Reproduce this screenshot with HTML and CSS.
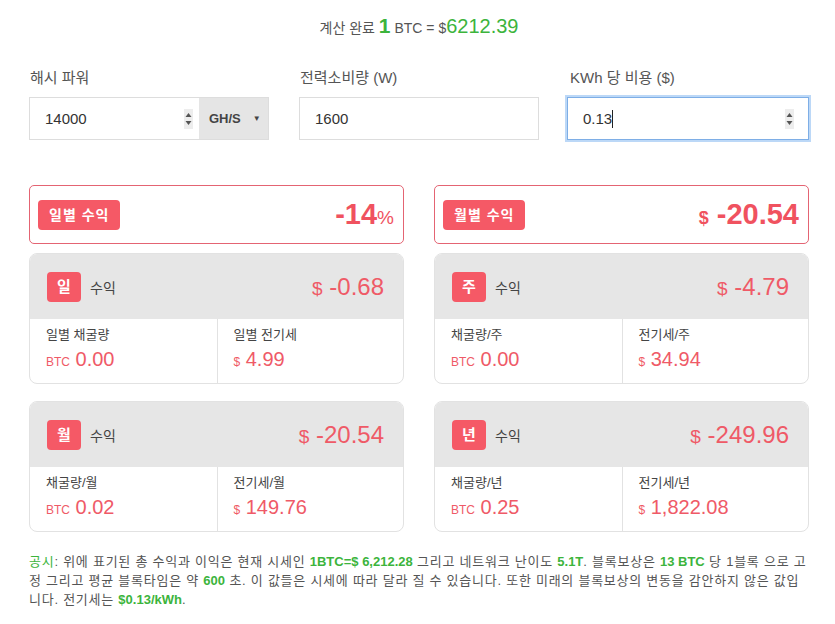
FILE: index.html
```html
<!DOCTYPE html>
<html lang="ko">
  <head>
    <meta charset="UTF-8" />
    <meta name="viewport" content="width=device-width, initial-scale=1.0" />
    <title>채굴 수익 계산기</title>
    <link rel="stylesheet" href="styles.css">
  </head>
  <body>
    <div class="page">
      <p class="rate">계산 완료 <b class="rate-num">1</b> BTC = $<span class="rate-price">6212.39</span></p>

      <div class="inputs">
        <div class="field">
          <div class="label">해시 파워</div>
          <div class="box">
            <span class="val">14000</span>
            <svg class="spin" width="9" height="20" viewBox="0 0 9 20"><rect width="9" height="20" fill="#ededed"/><path d="M1.5 8 L4.5 4 L7.5 8 Z M1.5 12 L4.5 16 L7.5 12 Z" fill="#555"/></svg>
            <span class="unit">GH/S <span class="caret-down">▼</span></span>
          </div>
        </div>
        <div class="field">
          <div class="label">전력소비량 (W)</div>
          <div class="box">
            <span class="val">1600</span>
          </div>
        </div>
        <div class="field">
          <div class="label">KWh 당 비용 ($)</div>
          <div class="box focus">
            <span class="val">0.13<i class="cursor"></i></span>
            <svg class="spin" width="9" height="20" viewBox="0 0 9 20"><rect width="9" height="20" fill="#ededed"/><path d="M1.5 8 L4.5 4 L7.5 8 Z M1.5 12 L4.5 16 L7.5 12 Z" fill="#555"/></svg>
          </div>
        </div>
      </div>

      <div class="summary">
        <div class="sum-card">
          <span class="tag">일별 수익</span>
          <span class="sum-value">-14<small>%</small></span>
        </div>
        <div class="sum-card">
          <span class="tag">월별 수익</span>
          <span class="sum-value"><small class="dollar">$</small> -20.54</span>
        </div>
      </div>

      <div class="cards">
        <div class="card">
          <div class="card-head">
            <span class="badge">일</span>
            <span class="head-label">수익</span>
            <span class="head-value"><small>$</small> -0.68</span>
          </div>
          <div class="card-body">
            <div class="cell">
              <div class="cell-label">일별 채굴량</div>
              <div class="cell-value"><small>BTC</small> 0.00</div>
            </div>
            <div class="cell">
              <div class="cell-label">일별 전기세</div>
              <div class="cell-value"><small>$</small> 4.99</div>
            </div>
          </div>
        </div>

        <div class="card">
          <div class="card-head">
            <span class="badge">주</span>
            <span class="head-label">수익</span>
            <span class="head-value"><small>$</small> -4.79</span>
          </div>
          <div class="card-body">
            <div class="cell">
              <div class="cell-label">채굴량/주</div>
              <div class="cell-value"><small>BTC</small> 0.00</div>
            </div>
            <div class="cell">
              <div class="cell-label">전기세/주</div>
              <div class="cell-value"><small>$</small> 34.94</div>
            </div>
          </div>
        </div>

        <div class="card">
          <div class="card-head">
            <span class="badge">월</span>
            <span class="head-label">수익</span>
            <span class="head-value"><small>$</small> -20.54</span>
          </div>
          <div class="card-body">
            <div class="cell">
              <div class="cell-label">채굴량/월</div>
              <div class="cell-value"><small>BTC</small> 0.02</div>
            </div>
            <div class="cell">
              <div class="cell-label">전기세/월</div>
              <div class="cell-value"><small>$</small> 149.76</div>
            </div>
          </div>
        </div>

        <div class="card">
          <div class="card-head">
            <span class="badge">년</span>
            <span class="head-label">수익</span>
            <span class="head-value"><small>$</small> -249.96</span>
          </div>
          <div class="card-body">
            <div class="cell">
              <div class="cell-label">채굴량/년</div>
              <div class="cell-value"><small>BTC</small> 0.25</div>
            </div>
            <div class="cell">
              <div class="cell-label">전기세/년</div>
              <div class="cell-value"><small>$</small> 1,822.08</div>
            </div>
          </div>
        </div>
      </div>

      <p class="notice">
        <span class="green">공시</span>: 위에 표기된 총 수익과 이익은 현재 시세인 <b class="green">1BTC=$ 6,212.28</b> 그리고 네트워크 난이도 <b class="green">5.1T</b>. 블록보상은 <b class="green">13 BTC</b> 당 1블록 으로 고정 그리고 평균 블록타임은 약 <b class="green">600</b> 초. 이 값들은 시세에 따라 달라 질 수 있습니다. 또한 미래의 블록보상의 변동을 감안하지 않은 값입니다. 전기세는 <b class="green">$0.13/kWh</b>.
      </p>
    </div>
  </body>
</html>
```

FILE: styles.css
```css
body {
  margin: 0;
  font-family: "Liberation Sans", Arial, "Noto Sans CJK KR", sans-serif;
  color: #555;
  background: #fff;
}
.page {
  width: 780px;
  margin-left: 29px;
}
.rate {
  margin: 0;
  padding-top: 12px;
  text-align: center;
  font-size: 14px;
  color: #555;
  line-height: 28px;
}
.rate-num {
  font-size: 21px;
  color: #3cb43c;
}
.rate-price {
  font-size: 20px;
  color: #3cb43c;
}
.inputs {
  display: grid;
  grid-template-columns: repeat(3, 1fr);
  gap: 30px;
  margin-top: 27px;
}
.label {
  font-size: 15px;
  line-height: 18px;
  color: #555;
  margin-bottom: 10px;
  padding-left: 1px;
}
.box {
  display: flex;
  align-items: center;
  height: 43px;
  box-sizing: border-box;
  border: 1px solid #ddd;
  font-size: 15px;
  color: #333;
}
.box .val {
  flex: 1;
  padding-left: 15px;
  display: flex;
  align-items: center;
}
.box .spin {
  margin-right: 6px;
}
.box.focus {
  margin-left: -2px;
  border: 1px solid #7eaee6;
  box-shadow: 0 0 0 2px #bcd8f7;
}
.box.focus .spin {
  margin-right: 14px;
}
.cursor {
  display: inline-block;
  width: 1px;
  height: 18px;
  background: #222;
}
.unit {
  align-self: stretch;
  display: flex;
  align-items: center;
  width: 69px;
  box-sizing: border-box;
  padding-left: 10px;
  background: #e5e5e5;
  font-size: 13px;
  font-weight: bold;
  color: #444;
}
.caret-down {
  font-size: 8px;
  margin-left: 12px;
}
.summary {
  display: grid;
  grid-template-columns: 1fr 1fr;
  gap: 30px;
  margin-top: 45px;
}
.sum-card {
  display: flex;
  align-items: center;
  justify-content: space-between;
  height: 59px;
  box-sizing: border-box;
  padding: 0 9px 0 8px;
  border: 1px solid #e46473;
  border-radius: 5px;
}
.tag {
  background: #f55966;
  color: #fff;
  font-size: 14px;
  font-weight: bold;
  line-height: 30px;
  padding: 0 11px;
  border-radius: 4px;
  letter-spacing: 1px;
}
.sum-value {
  font-size: 29px;
  font-weight: bold;
  color: #f0525f;
}
.sum-value small {
  font-size: 19px;
  font-weight: normal;
}
.sum-value small.dollar {
  font-size: 18px;
  font-weight: bold;
}
.cards {
  display: grid;
  grid-template-columns: 1fr 1fr;
  column-gap: 30px;
  row-gap: 17px;
  margin-top: 9px;
}
.card {
  border: 1px solid #e2e2e2;
  border-radius: 8px;
  overflow: hidden;
}
.card-head {
  display: flex;
  align-items: center;
  height: 65px;
  padding: 0 19px 0 17px;
  background: #e6e6e6;
}
.badge {
  width: 34px;
  height: 30px;
  line-height: 30px;
  text-align: center;
  background: #f55966;
  color: #fff;
  font-size: 15px;
  font-weight: bold;
  border-radius: 4px;
}
.head-label {
  margin-left: 9px;
  font-size: 14px;
  color: #444;
  flex: 1;
}
.head-value {
  font-size: 24px;
  color: #ef5a67;
}
.head-value small {
  font-size: 19px;
}
.card-body {
  display: grid;
  grid-template-columns: 1fr 1fr;
  height: 64px;
}
.cell {
  padding: 7px 16px 0;
}
.cell + .cell {
  border-left: 1px solid #e2e2e2;
}
.cell-label {
  font-size: 13px;
  color: #444;
  line-height: 18px;
}
.cell-value {
  margin-top: 3px;
  font-size: 20px;
  color: #ef5a67;
  line-height: 24px;
}
.cell-value small {
  font-size: 12px;
}
.notice {
  margin: 20px 0 0;
  font-size: 13px;
  line-height: 19px;
  letter-spacing: 0.75px;
  color: #555;
}
.notice b {
  letter-spacing: 0;
}
.green {
  color: #3cb43c;
}
```
